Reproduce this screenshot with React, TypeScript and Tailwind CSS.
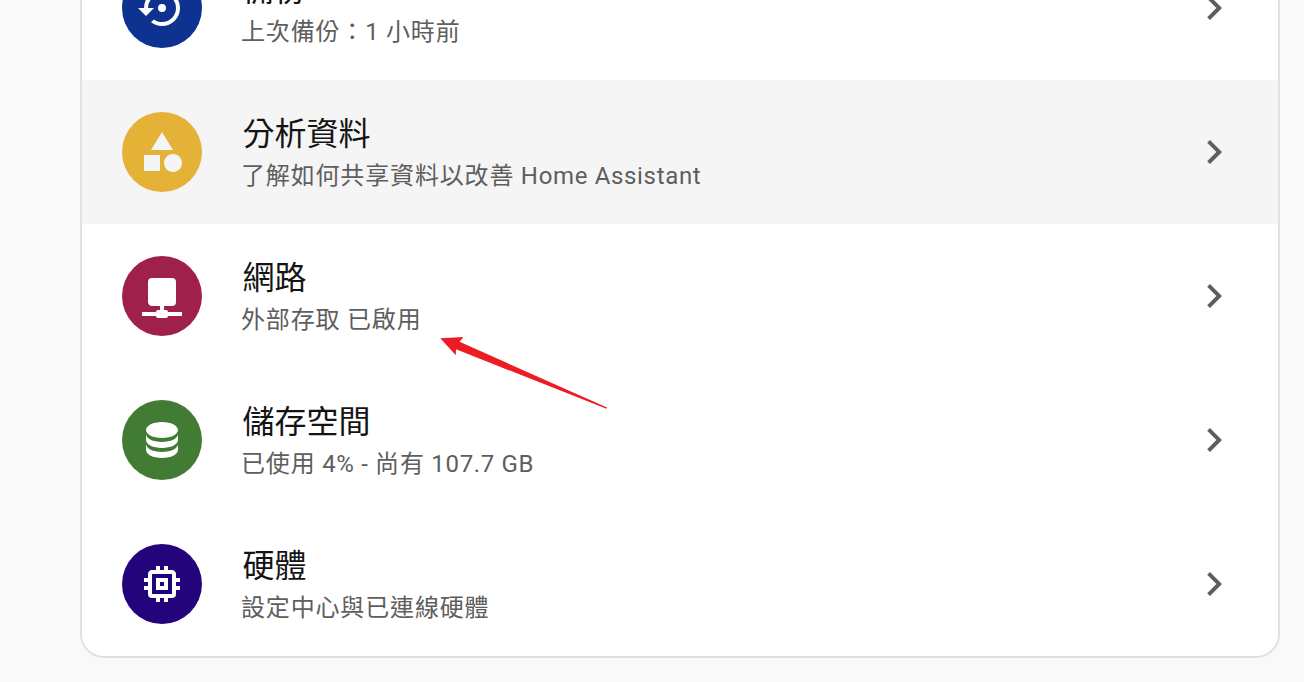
import { Fragment } from "react";

type Item = {
  title: string;
  detail: string;
  color: string;
  icon: string;
  active?: boolean;
};

const items: Item[] = [
  {
    title: "備份",
    detail: "上次備份：1 小時前",
    color: "bg-[#0d3290]",
    icon: "M12,3A9,9 0 0,0 3,12H0L4,16L8,12H5A7,7 0 0,1 12,5A7,7 0 0,1 19,12A7,7 0 0,1 12,19C10.5,19 9.09,18.5 7.94,17.7L6.5,19.14C8.04,20.3 9.94,21 12,21A9,9 0 0,0 21,12A9,9 0 0,0 12,3M14,12A2,2 0 0,0 12,10A2,2 0 0,0 10,12A2,2 0 0,0 12,14A2,2 0 0,0 14,12Z",
  },
  {
    title: "分析資料",
    detail: "了解如何共享資料以改善 Home Assistant",
    color: "bg-[#e4b237]",
    icon: "M11,13.5V21.5H3V13.5H11M12,2L17.5,11H6.5L12,2M17.5,13C20,13 22,15 22,17.5C22,20 20,22 17.5,22C15,22 13,20 13,17.5C13,15 15,13 17.5,13Z",
    active: true,
  },
  {
    title: "網路",
    detail: "外部存取 已啟用",
    color: "bg-[#9f204a]",
    icon: "M17,3A2,2 0 0,1 19,5V15A2,2 0 0,1 17,17H13V19H14A1,1 0 0,1 15,20H22V22H15A1,1 0 0,1 14,23H10A1,1 0 0,1 9,22H2V20H9A1,1 0 0,1 10,19H11V17H7C5.89,17 5,16.1 5,15V5A2,2 0 0,1 7,3H17Z",
  },
  {
    title: "儲存空間",
    detail: "已使用 4% - 尚有 107.7 GB",
    color: "bg-[#427c34]",
    icon: "M12,3C7.58,3 4,4.79 4,7C4,9.21 7.58,11 12,11C16.42,11 20,9.21 20,7C20,4.79 16.42,3 12,3M4,9V12C4,14.21 7.58,16 12,16C16.42,16 20,14.21 20,12V9C20,11.21 16.42,13 12,13C7.58,13 4,11.21 4,9M4,14V17C4,19.21 7.58,21 12,21C16.42,21 20,19.21 20,17V14C20,16.21 16.42,18 12,18C7.58,18 4,16.21 4,14Z",
  },
  {
    title: "硬體",
    detail: "設定中心與已連線硬體",
    color: "bg-[#24047a]",
    icon: "M17,17H7V7H17M21,11V9H19V7C19,5.89 18.1,5 17,5H15V3H13V5H11V3H9V5H7C5.89,5 5,5.89 5,7V9H3V11H5V13H3V15H5V17A2,2 0 0,0 7,19H9V21H11V19H13V21H15V19H17A2,2 0 0,0 19,17V15H21V13H19V11M13,13H11V11H13M15,9H9V15H15V9Z",
  },
];

function Icon({ path, className }: { path: string; className: string }) {
  return (
    <svg viewBox="0 0 24 24" className={className} fill="currentColor" aria-hidden="true">
      <path d={path} />
    </svg>
  );
}

// Latin runs are set slightly tighter than the Chinese text around them.
function Detail({ text }: { text: string }) {
  return (
    <span className="-ml-px text-2xl leading-10 tracking-[0.84px] text-[#5e5e5e]">
      {text.split(/([ -~]+)/).map((part, i) =>
        i % 2 ? (
          <span key={i} className="tracking-[0.66px]">
            {part}
          </span>
        ) : (
          <Fragment key={i}>{part}</Fragment>
        ),
      )}
    </span>
  );
}

function Row({ item }: { item: Item }) {
  return (
    <li className={item.active ? "bg-[#f5f5f5]" : "bg-white"}>
      <a href="#" className="flex h-36 items-center px-10">
        <span className={`flex size-20 shrink-0 items-center justify-center rounded-full ${item.color}`}>
          <Icon path={item.icon} className={item.active ? "size-12 text-[#f5f5f5]" : "size-12 text-white"} />
        </span>
        <span className="ml-10 flex grow flex-col pt-1">
          <span className="pl-[0.5px] text-[32px] leading-[44px] text-[#141414]">{item.title}</span>
          <Detail text={item.detail} />
        </span>
        <Icon path="M8.59,16.58L13.17,12L8.59,7.41L10,6L16,12L10,18L8.59,16.58Z" className="size-12 shrink-0 text-[#5e5e5e]" />
      </a>
    </li>
  );
}

export default function App() {
  return (
    <div
      lang="zh-Hant"
      className="relative h-[682px] w-[1304px] overflow-hidden bg-[#f9f9f9] px-20 font-['Roboto','Noto_Sans_CJK_TC',sans-serif]"
    >
      <ul className="-mt-16 w-[1200px] overflow-hidden rounded-b-3xl border-2 border-t-0 border-[#e0e0e0] bg-white">
        {items.map((item) => (
          <Row key={item.title} item={item} />
        ))}
      </ul>
      <svg
        viewBox="0 0 168 74"
        className="absolute top-[336px] left-[440px] h-[74px] w-[168px]"
        fill="#ed1c24"
        aria-hidden="true"
      >
        <path d="M0.3 2.2L23.5 1L19.6 5.8L167 71.6L166.5 72.8L16 13.3L15.8 19.3Z" />
      </svg>
    </div>
  );
}
